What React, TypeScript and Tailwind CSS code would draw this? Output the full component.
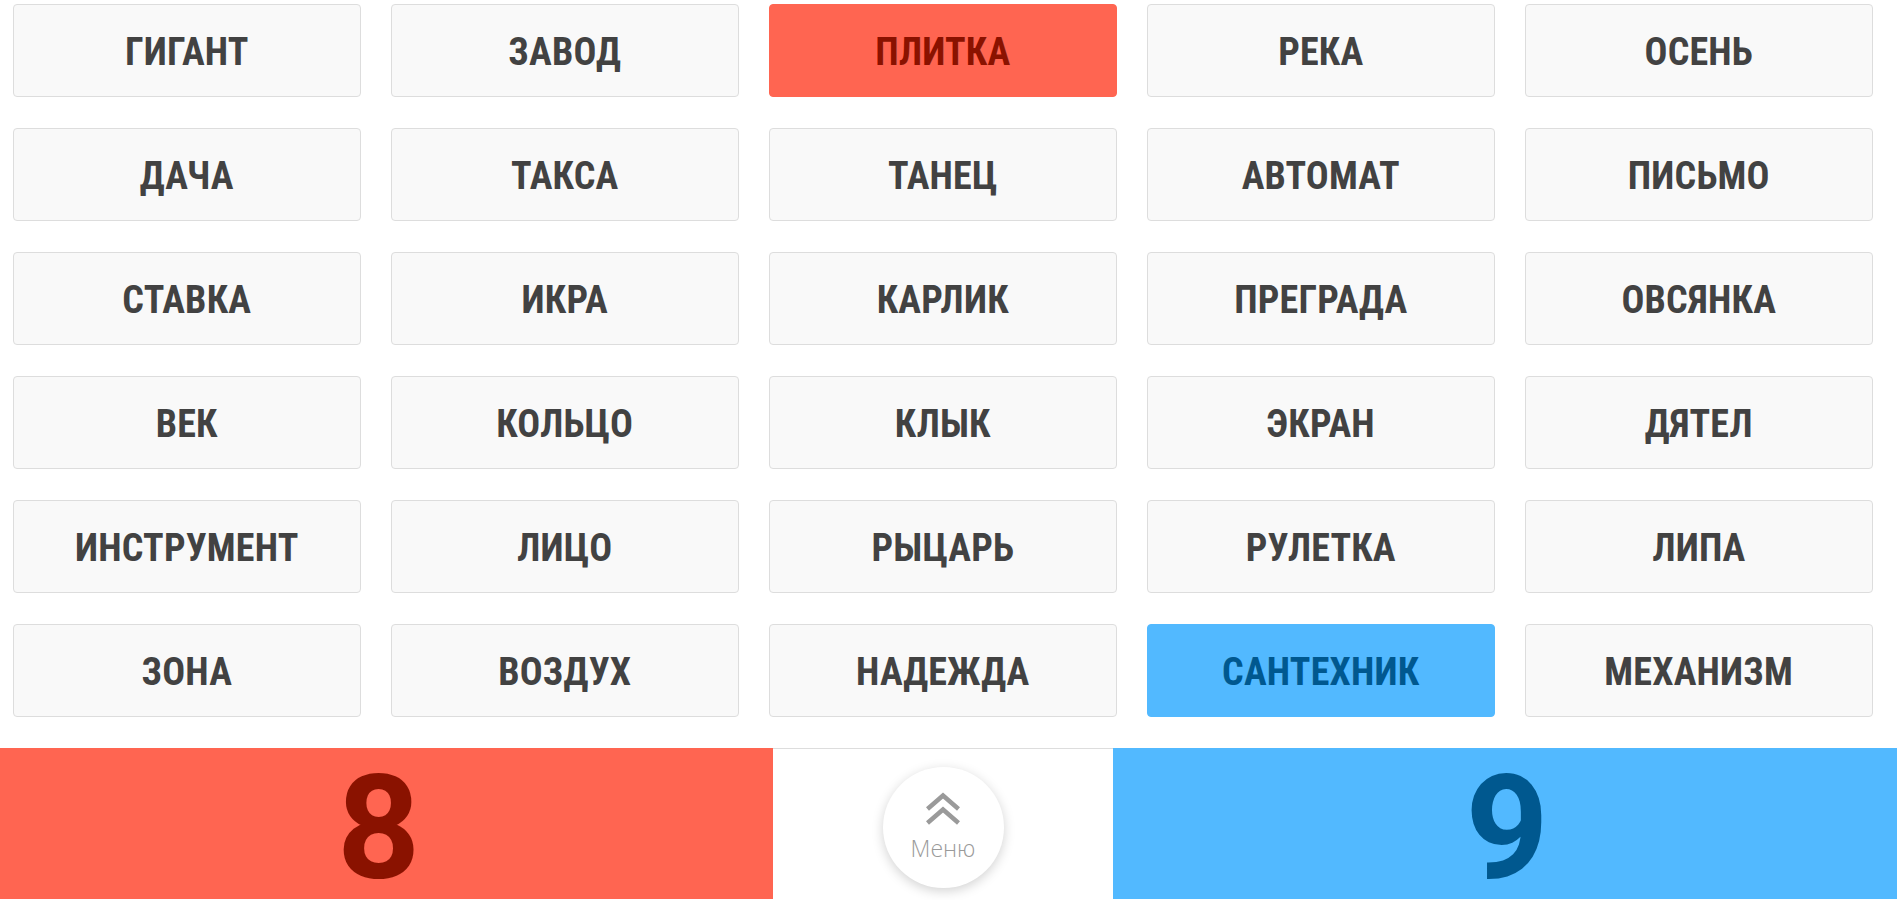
import React from "react";

const words: string[] = [
  "ГИГАНТ", "ЗАВОД", "ПЛИТКА", "РЕКА", "ОСЕНЬ",
  "ДАЧА", "ТАКСА", "ТАНЕЦ", "АВТОМАТ", "ПИСЬМО",
  "СТАВКА", "ИКРА", "КАРЛИК", "ПРЕГРАДА", "ОВСЯНКА",
  "ВЕК", "КОЛЬЦО", "КЛЫК", "ЭКРАН", "ДЯТЕЛ",
  "ИНСТРУМЕНТ", "ЛИЦО", "РЫЦАРЬ", "РУЛЕТКА", "ЛИПА",
  "ЗОНА", "ВОЗДУХ", "НАДЕЖДА", "САНТЕХНИК", "МЕХАНИЗМ",
];

function Card({ word }: { word: string }) {
  let cls = "bg-[#f9f9f9] border border-[#dddddd] text-[#424242]";
  if (word === "ПЛИТКА") cls = "bg-[#ff6551] border border-[#ff6551] text-[#8a1200]";
  if (word === "САНТЕХНИК") cls = "bg-[#52b9ff] border border-[#52b9ff] text-[#00588f]";
  return (
    <div
      className={`${cls} h-[93px] rounded-[4px] flex items-center justify-center font-bold text-[38px] leading-none tracking-[0.2px] font-['Roboto_Condensed','Roboto',sans-serif]`}
    >
      <span className="mt-[2px]">{word}</span>
    </div>
  );
}

export default function App() {
  return (
    <div className="w-[1897px] h-[900px] bg-white flex flex-col overflow-hidden">
      <div className="grid grid-cols-5 gap-x-[30.5px] gap-y-[31px] pl-[13px] pr-[24.5px] pt-[4px]">
        {words.map((w) => (
          <Card key={w} word={w} />
        ))}
      </div>
      <div className="mt-[31px] flex h-[151px]">
        <div className="w-[773px] bg-[#ff6551] flex items-center justify-center pr-[16px] pt-[8px] text-[#8a1200] font-bold text-[145px] leading-[130px] font-['Roboto',sans-serif]">
          <span>8</span>
        </div>
        <div className="w-[340px] border-t border-[#dddddd] flex justify-center pt-[18px]">
          <div className="w-[121px] h-[121px] rounded-full bg-white shadow-[0_3px_12px_rgba(0,0,0,0.18)] flex flex-col items-center pt-[25px]">
            <svg width="34" height="33" viewBox="0 0 34 33" fill="none" stroke="#9a9a9a" strokeWidth="4.5" strokeLinecap="butt" strokeLinejoin="miter">
              <path d="M1.5 17 L17 3.5 L32.5 17" />
              <path d="M1.5 31 L17 17.5 L32.5 31" />
            </svg>
            <span className="mt-[12px] text-[23px] leading-none text-[#9a9a9a] font-light font-['Open_Sans',sans-serif]">
              Меню
            </span>
          </div>
        </div>
        <div className="flex-1 bg-[#52b9ff] flex items-center justify-center pl-[4px] pt-[8px] text-[#00588f] font-bold text-[145px] leading-[130px] font-['Roboto',sans-serif]">
          <span>9</span>
        </div>
      </div>
    </div>
  );
}
